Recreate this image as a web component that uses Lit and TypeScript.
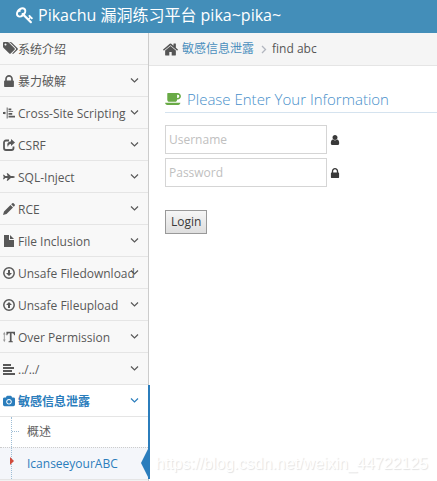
import { LitElement, html, css, svg } from "lit";
import { customElement, property } from "lit/decorators.js";

interface Glyph {
  box: string;
  body: unknown;
}

const FULL = "0 0 1792 1792";

const LOCK = svg`<path d="M640 768h512v-192q0-106-75-181t-181-75-181 75-75 181v192zm832 96v576q0 40-28 68t-68 28h-960q-40 0-68-28t-28-68v-576q0-40 28-68t68-28h32v-192q0-184 132-316t316-132 316 132 132 316v192h32q40 0 68 28t28 68z"/>`;

const GLYPHS: Record<string, Glyph> = {
  key: {
    box: FULL,
    body: svg`<path d="M832 512q0-80-56-136t-136-56-136 56-56 136q0 42 19 83-41-19-83-19-80 0-136 56t-56 136 56 136 136 56 136-56 56-136q0-42-19-83 41 19 83 19 80 0 136-56t56-136zm851 704q0 17-49 66t-66 49q-9 0-28.5-16t-36.5-33-38.5-40-24.5-26l-96 96 220 220q28 28 28 68 0 42-39 81t-81 39q-40 0-68-28l-671-671q-176 131-365 131-163 0-265.5-102.5t-102.5-265.5q0-160 95-313t248-248 313-95q163 0 265.5 102.5t102.5 265.5q0 189-131 365l355 355 96-96q-3-3-26-24.5t-40-38.5-33-36.5-16-28.5q0-17 49-66t66-49q13 0 23 10 6 6 46 44.5t82 79.5 86.5 86 73 78 28.5 41z"/>`,
  },
  tags: {
    box: "0 60 1920 1792",
    body: svg`<path d="M448 448q0-53-37.5-90.5t-90.5-37.5-90.5 37.5-37.5 90.5 37.5 90.5 90.5 37.5 90.5-37.5 37.5-90.5zm1067 576q0 53-37 90l-491 492q-39 37-91 37-53 0-90-37l-715-716q-38-37-64.5-101t-26.5-117v-416q0-52 38-90t90-38h416q53 0 117 26.5t102 64.5l715 714q37 39 37 91zm384 0q0 53-37 90l-491 492q-39 37-91 37-36 0-59-14t-53-45l470-470q37-37 37-90 0-52-37-91l-715-714q-38-38-102-64.5t-117-26.5h224q53 0 117 26.5t102 64.5l715 714q37 39 37 91z"/>`,
  },
  lock: { box: "320 128 1152 1408", body: LOCK },
  pencil: {
    box: "0 0 12 12",
    body: svg`<path d="M0 12l1-3.500L7.500 2l2.500 2.500L3.500 11zM8.200 1.300L9.300.3q.7-.5 1.300 0l1.100 1.100q.5.6 0 1.300l-1 1.100z"/>`,
  },
  file: {
    box: "0 0 10 12",
    body: svg`<path d="M0 0h5v5h5v7H0zM6 0l4 4H6z"/>`,
  },
  home: {
    box: "90 200 1612 1380",
    body: svg`<path d="M1472 992v480q0 26-19 45t-45 19h-384v-384h-256v384h-384q-26 0-45-19t-19-45v-480q0-1 .5-3t.5-3l575-474 575 474q1 2 1 6zm223-69l-62 74q-8 9-21 11h-3q-13 0-21-7l-692-577-692 577q-12 8-24 7-13-2-21-11l-62-74q-8-10-7-23.5t11-21.5l719-599q32-26 76-26t76 26l244 204v-195q0-14 9-23t23-9h192q14 0 23 9t9 23v408l219 182q10 8 11 21.5t-7 23.5z"/>`,
  },
  coffee: {
    box: "0 256 1856 1408",
    body: svg`<path d="M1664 640q0-80-56-136t-136-56h-64v384h64q80 0 136-56t56-136zm-1664 768h1792q0 106-75 181t-181 75h-1280q-106 0-181-75t-75-181zm1856-768q0 159-112.5 271.5t-271.5 112.5h-64v32q0 92-66 158t-158 66h-704q-92 0-158-66t-66-158v-736q0-26 19-45t45-19h1152q159 0 271.5 112.5t112.5 271.5z"/>`,
  },
  camera: {
    box: "-96 0 1920 1664",
    body: svg`<path d="M864 672q119 0 203.5 84.5t84.5 203.5-84.5 203.5-203.5 84.5-203.5-84.5-84.5-203.5 84.5-203.5 203.5-84.5zm704-416q106 0 181 75t75 181v896q0 106-75 181t-181 75h-1408q-106 0-181-75t-75-181v-896q0-106 75-181t181-75h224l51-136q19-49 69.5-84.5t103.5-35.5h512q53 0 103.5 35.5t69.5 84.5l51 136h224zm-704 1152q185 0 316.5-131.5t131.5-316.5-131.5-316.5-316.5-131.5-316.5 131.5-131.5 316.5 131.5 316.5 316.5 131.5z"/>`,
  },
  user: {
    box: "256 128 1280 1536",
    body: svg`<path d="M1536 1399q0 109-62.5 187t-150.5 78h-854q-88 0-150.5-78t-62.5-187q0-85 8.5-160.5t31.5-152 58.5-131 94-89 134.5-34.5q131 128 313 128t313-128q76 0 134.5 34.5t94 89 58.5 131 31.5 152 8.5 160.5zm-256-887q0 159-112.5 271.5t-271.5 112.5-271.5-112.5-112.5-271.5 112.5-271.5 271.5-112.5 271.5 112.5 112.5 271.5z"/>`,
  },
  indent: {
    box: "0 0 13 12",
    body: svg`<path d="M0 5h2V4l1 2-1 2V7H0z"/><path d="M4 0h1v12H4zM6 1h3v2H6zM6 4h5v1H6zM6 6h4v2H6zM6 9h7v2H6z"/>`,
  },
  share: {
    box: "0 0 12 12",
    body: svg`<path d="M6 1.500H3a2 2 0 0 0-2 2V9a2 2 0 0 0 2 2h5.500a2 2 0 0 0 2-2V7.500" fill="none" stroke="currentColor" stroke-width="1.800"/><path d="M8 0l4 3.500L8 7V5Q5 5 5 8.500Q2.500 3 8 2.200z"/>`,
  },
  plane: {
    box: "0 0 13 12",
    body: svg`<path d="M0 3.500h1L2.500 5H5L4 2h1.200l3.300 3H11q2 .4 2 1t-2 1H8.500L5.200 10H4l1-3H2.500L1 8.500H0L.8 6z"/>`,
  },
  down: {
    box: "0 0 12 12",
    body: svg`<circle cx="6" cy="6" r="5.200" fill="none" stroke="currentColor" stroke-width="1.500"/><path d="M5 3h2v3h2L6 9 3 6h2z"/>`,
  },
  up: {
    box: "0 0 12 12",
    body: svg`<circle cx="6" cy="6" r="5.200" fill="none" stroke="currentColor" stroke-width="1.500"/><path d="M5 9h2V6h2L6 3 3 6h2z"/>`,
  },
  textheight: {
    box: "0 0 14 12",
    body: svg`<path d="M1 2h1v8H1zM0 3l1.500-3L3 3zM0 9h3l-1.500 3z" opacity=".6"/><path d="M4 0h10v4h-1q-.3-2.500-2-2.500h-1V10q0 1 1.500 1v1h-5v-1Q8 11 8 10V1.500H7Q5.300 1.500 5 4H4z"/>`,
  },
  align: {
    box: "0 0 12 12",
    body: svg`<path d="M0 1h8v2H0zM0 4h11v2H0zM0 7h9v2H0zM0 10h12v2H0z"/>`,
  },
  chevron: {
    box: "0 0 9 9",
    body: svg`<path d="M1 2.500l3.500 3.500L8 2.500" fill="none" stroke="currentColor" stroke-width="1.200"/>`,
  },
  angle: {
    box: "0 0 9 9",
    body: svg`<path d="M3 1l3.500 3.500L3 8" fill="none" stroke="currentColor" stroke-width="1.300"/>`,
  },
  caret: { box: "0 0 4 8", body: svg`<path d="M0 0l4 4-4 4z"/>` },
};

@customElement("ui-glyph")
class UiGlyph extends LitElement {
  @property() name = "";

  static styles = css`
    :host {
      display: block;
      flex: none;
      width: 12px;
      height: 12px;
    }
    .art {
      display: block;
      width: 100%;
      height: 100%;
      fill: currentColor;
    }
  `;

  render() {
    const g = GLYPHS[this.name];
    return g
      ? html`<svg class="art" viewBox=${g.box} aria-hidden="true">${g.body}</svg>`
      : null;
  }
}

const MENU = [
  { icon: "tags", label: "系统介绍", leaf: true },
  { icon: "lock", label: "暴力破解" },
  { icon: "indent", label: "Cross-Site Scripting" },
  { icon: "share", label: "CSRF" },
  { icon: "plane", label: "SQL-Inject" },
  { icon: "pencil", label: "RCE" },
  { icon: "file", label: "File Inclusion" },
  { icon: "down", label: "Unsafe Filedownload" },
  { icon: "up", label: "Unsafe Fileupload" },
  { icon: "textheight", label: "Over Permission" },
  { icon: "align", label: "../../" },
  {
    icon: "camera",
    label: "敏感信息泄露",
    children: [{ label: "概述" }, { label: "IcanseeyourABC", current: true }],
  },
] as {
  icon: string;
  label: string;
  leaf?: boolean;
  children?: { label: string; current?: boolean }[];
}[];

@customElement("app-root")
class AppRoot extends LitElement {
  static styles = css`
    :host {
      display: flex;
      flex-direction: column;
      min-height: 100vh;
      position: relative;
      overflow: hidden;
      background: #fff;
      color: #393939;
      font-family: "Open Sans", "Noto Sans CJK SC", sans-serif;
      font-size: 12px;
      line-height: 20px;
    }
    * {
      box-sizing: border-box;
    }
    a {
      text-decoration: none;
      color: inherit;
    }
    ul {
      list-style: none;
      margin: 0;
      padding: 0;
    }
    .navbar {
      display: flex;
      align-items: center;
      height: 33px;
      padding: 0 16px 4px;
      background: #438eb9;
      color: #fff;
    }
    .brand {
      display: flex;
      align-items: center;
      gap: 4px;
      font-size: 16px;
      line-height: 28px;
      white-space: nowrap;
    }
    .brand ui-glyph {
      width: 18px;
      height: 18px;
    }
    .body {
      display: flex;
      flex: 1;
    }
    .sidebar {
      flex: none;
      width: 149px;
      border-right: 1px solid #ccc;
      background: #f2f2f2;
    }
    .item {
      position: relative;
      border-bottom: 1px solid #e5e5e5;
      background: #f8f8f8;
      color: #585858;
    }
    .link {
      display: flex;
      align-items: center;
      gap: 3px;
      height: 31px;
      padding-left: 3px;
      white-space: nowrap;
    }
    .link span {
      padding-top: 2px;
    }
    .link ui-glyph[name="tags"] {
      width: 15px;
      height: 15px;
      margin-right: -3px;
    }
    .link ui-glyph.more {
      position: absolute;
      right: 9px;
      top: 11px;
      width: 9px;
      height: 9px;
    }
    .item.open {
      background: #fff;
      color: #2b7dbc;
    }
    .item.open::after {
      content: "";
      position: absolute;
      top: 0;
      bottom: 0;
      right: -2px;
      width: 2px;
      background: #2b7dbc;
    }
    .open > .link {
      font-weight: 700;
    }
    .sub {
      position: relative;
      border-top: 1px solid #e5e5e5;
    }
    .sub::before {
      content: "";
      position: absolute;
      left: 11px;
      top: 0;
      bottom: 0;
      z-index: 1;
      border-left: 1px dotted #9dbdd6;
    }
    .leaf {
      position: relative;
      color: #616161;
    }
    .leaf + .leaf {
      border-top: 1px dotted #ccc;
    }
    .leaf .link {
      height: 30px;
      padding-left: 27px;
    }
    .leaf:not(.current)::before {
      content: "";
      position: absolute;
      left: 12px;
      top: 14px;
      width: 7px;
      border-top: 1px dotted #9dbdd6;
    }
    .leaf.current {
      background: #f4f6fa;
      color: #2b7dbc;
    }
    .leaf.current .link {
      height: 31px;
    }
    .leaf.current ui-glyph {
      position: absolute;
      left: 10px;
      top: 9px;
      z-index: 2;
      width: 4px;
      height: 8px;
      color: #d04b3c;
    }
    .leaf.current::after {
      content: "";
      position: absolute;
      right: 0;
      top: 1px;
      border: solid transparent;
      border-width: 14px 7px 14px 0;
      border-right-color: #2b7dbc;
    }
    .main {
      flex: 1;
      min-width: 0;
    }
    .crumbs {
      display: flex;
      align-items: center;
      height: 33px;
      padding: 0 14px;
      border-bottom: 1px solid #e5e5e5;
      background: #f5f5f5;
      color: #555;
      white-space: nowrap;
    }
    .crumbs ui-glyph[name="home"] {
      width: 15px;
      height: 13px;
      margin-right: 4px;
    }
    .crumbs ui-glyph[name="angle"] {
      width: 9px;
      height: 9px;
      margin: 0 4px 0 5px;
      color: #b2b6bf;
    }
    .crumbs a {
      color: #4c8fbd;
    }
    .form {
      padding: 20px 0 0 16px;
    }
    .title {
      display: flex;
      align-items: center;
      gap: 6px;
      margin: 0 0 12px;
      height: 27px;
      border-bottom: 1px solid #d5e3ef;
      font-size: 15px;
      font-weight: 300;
      line-height: 24px;
      color: #478fca;
      white-space: nowrap;
    }
    .title ui-glyph {
      width: 16px;
      height: 12px;
      color: #69aa46;
    }
    .field {
      display: flex;
      align-items: center;
      gap: 3px;
      margin-bottom: 4px;
    }
    .field input {
      width: 162px;
      height: 29px;
      padding: 0 3px;
      border: 1px solid #d5d5d5;
      border-radius: 0;
      background: #fff;
      color: #858585;
      font: inherit;
      outline: 0;
    }
    .field input::placeholder {
      color: #c0c0c0;
      opacity: 1;
    }
    .field ui-glyph {
      width: 10px;
      height: 10px;
    }
    .submit {
      margin-top: 19px;
      height: 24px;
      padding: 0 5px;
      border: 1px solid #999;
      border-radius: 0;
      background: linear-gradient(#f6f6f6, #dedede);
      color: #393939;
      font: inherit;
      line-height: 20px;
    }
    .mark {
      position: absolute;
      right: 9px;
      bottom: 7px;
      color: #fff;
      text-shadow: 1px 1px 1px #e2e2e2;
      font-family: "Liberation Sans", sans-serif;
      font-size: 16px;
      line-height: 20px;
      white-space: nowrap;
    }
  `;

  render() {
    return html`
      <header class="navbar">
        <a class="brand" href="#"><ui-glyph name="key"></ui-glyph>Pikachu 漏洞练习平台 pika~pika~</a>
      </header>
      <div class="body">
        <nav class="sidebar">
          <ul>
            ${MENU.map(
              (m) => html`<li class="item ${m.children ? "open" : ""}">
                <a class="link" href="#"
                  ><ui-glyph name=${m.icon}></ui-glyph><span>${m.label}</span>${m.leaf
                    ? null
                    : html`<ui-glyph class="more" name="chevron"></ui-glyph>`}</a
                >
                ${m.children
                  ? html`<ul class="sub">
                      ${m.children.map(
                        (c) => html`<li class="leaf ${c.current ? "current" : ""}">
                          ${c.current ? html`<ui-glyph name="caret"></ui-glyph>` : null}
                          <a class="link" href="#">${c.label}</a>
                        </li>`
                      )}
                    </ul>`
                  : null}
              </li>`
            )}
          </ul>
        </nav>
        <main class="main">
          <div class="crumbs">
            <ui-glyph name="home"></ui-glyph><a href="#">敏感信息泄露</a
            ><ui-glyph name="angle"></ui-glyph><span>find abc</span>
          </div>
          <form class="form" @submit=${(e: Event) => e.preventDefault()}>
            <h4 class="title"><ui-glyph name="coffee"></ui-glyph>Please Enter Your Information</h4>
            <label class="field">
              <input type="text" placeholder="Username" aria-label="Username" />
              <ui-glyph name="user"></ui-glyph>
            </label>
            <label class="field">
              <input type="password" placeholder="Password" aria-label="Password" />
              <ui-glyph name="lock"></ui-glyph>
            </label>
            <button class="submit" type="submit">Login</button>
          </form>
        </main>
      </div>
      <div class="mark">https://blog.csdn.net/weixin_44722125</div>
    `;
  }
}
